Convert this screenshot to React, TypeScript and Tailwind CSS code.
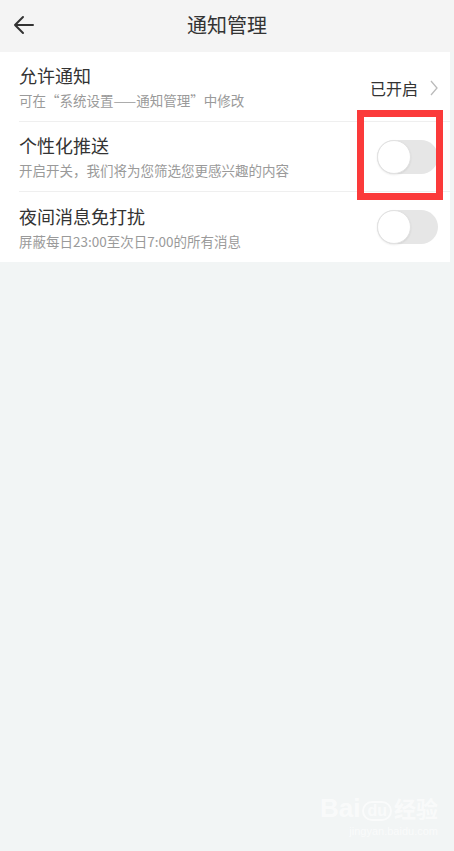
const font = { fontFamily: '"Noto Sans CJK SC", "Noto Sans", sans-serif' };

const Toggle = () => (
  <div className="w-[61px] h-[34px] rounded-full bg-[#e6e6e6] relative shrink-0">
    <div className="absolute left-0 top-0 w-[34px] h-[34px] rounded-full bg-white border border-[#e2e2e2] shadow-[0_1px_2px_rgba(0,0,0,0.08)]" />
  </div>
);

const Row = ({
  title,
  sub,
  right,
  divider,
}: {
  title: string;
  sub: string;
  right: React.ReactNode;
  divider?: boolean;
}) => (
  <div className="pl-[19px]">
    <div
      className={`h-[70px] flex items-center pr-[12px] ${
        divider ? "border-b border-[#efefef]" : ""
      }`}
    >
      <div className="flex-1 flex flex-col">
        <span className="text-[18px] leading-[22px] text-[#333]">{title}</span>
        <span className="mt-[5px] text-[13.5px] leading-[18px] text-[#9a9a9a]">
          {sub}
        </span>
      </div>
      {right}
    </div>
  </div>
);

export default function App() {
  return (
    <div
      className="w-[454px] min-h-[851px] bg-[#f2f5f5] relative overflow-hidden"
      style={font}
    >
      {/* Header */}
      <div className="h-[52px] bg-[#f4f4f4] relative flex items-center justify-center">
        <svg
          className="absolute left-[13px] top-[14px]"
          width="22"
          height="22"
          viewBox="0 0 22 22"
          fill="none"
          stroke="#333"
          strokeWidth="2"
          strokeLinecap="round"
          strokeLinejoin="round"
        >
          <path d="M20 11H2M10 3L2 11l8 8" />
        </svg>
        <span className="text-[20px] text-[#333] -mt-[2px]">通知管理</span>
      </div>

      {/* Settings card */}
      <div className="bg-white mr-[4px]">
        <Row
          title="允许通知"
          sub="可在“系统设置——通知管理”中修改"
          divider
          right={
            <div className="flex items-center gap-[12px] mt-[2px]">
              <span className="text-[16px] text-[#333]">已开启</span>
              <svg width="8" height="16" viewBox="0 0 8 16" fill="none" stroke="#bbb" strokeWidth="1.3">
                <path d="M1 1l6 7-6 7" />
              </svg>
            </div>
          }
        />
        <Row
          title="个性化推送"
          sub="开启开关，我们将为您筛选您更感兴趣的内容"
          divider
          right={
            <div className="relative">
              <Toggle />
              <div className="absolute left-[-20px] top-[-30px] w-[86px] h-[90px] border-[7px] border-[#fb3a3a]" />
            </div>
          }
        />
        <Row
          title="夜间消息免打扰"
          sub="屏蔽每日23:00至次日7:00的所有消息"
          right={<Toggle />}
        />
      </div>

      {/* watermark */}
      <div className="absolute right-[16px] bottom-[12px] flex flex-col items-end text-white/60 select-none">
        <div className="flex items-end text-[26px] leading-none font-bold" style={{ fontFamily: '"Liberation Sans", "Noto Sans CJK SC", sans-serif' }}>
          <span>Bai</span>
          <span className="text-[16px] border-2 border-white/60 rounded-full px-[3px] mx-[2px]">du</span>
          <span className="text-[22px]">经验</span>
        </div>
        <span className="text-[11px] mt-[2px]" style={{ fontFamily: '"Liberation Sans", sans-serif' }}>jingyan.baidu.com</span>
      </div>
    </div>
  );
}
